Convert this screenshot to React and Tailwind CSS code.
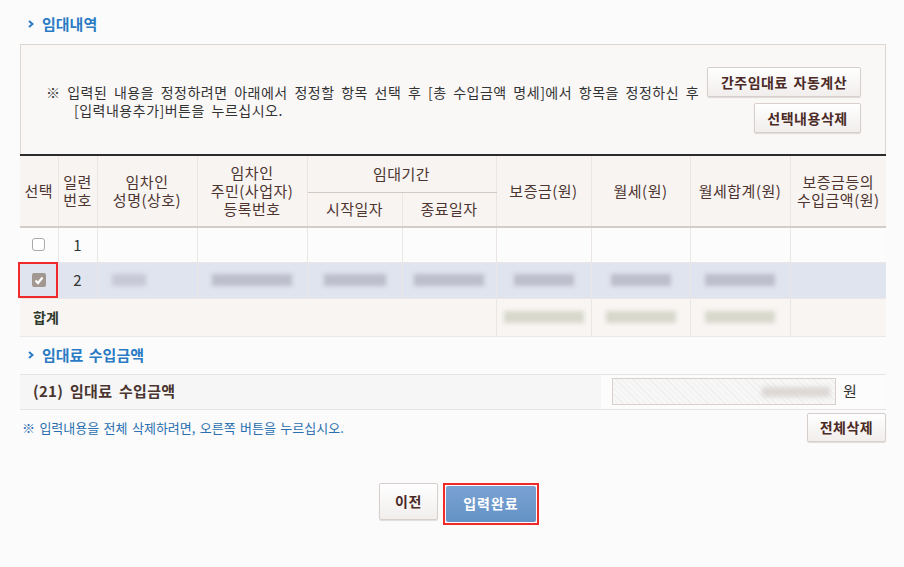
import React from "react";

const Chevron = () => (
  <svg width="6" height="8" viewBox="0 0 6 8" className="mr-[8px] shrink-0">
    <path d="M1 1 L4.5 4 L1 7" stroke="#2a7bc4" strokeWidth="2" fill="none" />
  </svg>
);

const Btn = ({ children, className = "" }) => (
  <button
    className={
      "rounded-[2px] border border-[#d6cfcb] bg-gradient-to-b from-white to-[#f1eeec] text-[14px] font-bold tracking-[0.5px] [word-spacing:2px] text-[#4b2a26] shadow-[0_1px_1px_rgba(0,0,0,0.12)] " +
      className
    }
  >
    {children}
  </button>
);

const Blur = ({ w, tone = "g" }) => (
  <div
    className={
      "mx-auto h-[12px] blur-[2px] " +
      (tone === "g" ? "bg-[#bdbdcc]" : "bg-[#d8d8cc]")
    }
    style={{ width: w }}
  />
);

export default function App() {
  const th =
    "border-r border-[#ebe6e3] text-[15px] font-normal tracking-[0.5px] text-[#4e3530] leading-[18px] text-center align-middle";
  const td = "border-r border-[#ebe6e3] text-center align-middle";
  return (
    <div className="min-h-[567px] w-[904px] bg-[#fbfbfb] font-['Noto_Sans_CJK_KR',sans-serif] text-[#333]">
      <div className="pl-[20px] pr-[18px]">
        {/* Section 1 title */}
        <div className="flex h-[44px] items-center pl-[8px] pt-[4px]">
          <Chevron />
          <span className="text-[15px] font-bold text-[#2a7bc4]">임대내역</span>
        </div>

        {/* Info box */}
        <div className="flex h-[110px] items-center justify-between border border-b-0 border-[#ddd7d2] bg-[#f9f8f7] pl-[25px] pr-[24px]">
          <div className="pt-[2px] text-[14px] leading-[18px] tracking-[0.5px] [word-spacing:3px] text-[#333]">
            <div>※ 입력된 내용을 정정하려면 아래에서 정정할 항목 선택 후 [총 수입금액 명세]에서 항목을 정정하신 후</div>
            <div className="pl-[28px]">[입력내용추가]버튼을 누르십시오.</div>
          </div>
          <div className="flex flex-col items-end gap-[6px] pt-[1px]">
            <Btn className="h-[30px] w-[154px]">간주임대료 자동계산</Btn>
            <Btn className="h-[30px] w-[107px]">선택내용삭제</Btn>
          </div>
        </div>

        {/* Table */}
        <table className="w-[866px] table-fixed border-collapse border-t-2 border-[#2b2b2b]">
          <colgroup>
            <col className="w-[38px]" />
            <col className="w-[39px]" />
            <col className="w-[100px]" />
            <col className="w-[110px]" />
            <col className="w-[95px]" />
            <col className="w-[94px]" />
            <col className="w-[95px]" />
            <col className="w-[99px]" />
            <col className="w-[100px]" />
            <col className="w-[96px]" />
          </colgroup>
          <thead className="bg-[#f7f4f2]">
            <tr className="h-[37px]">
              <th rowSpan={2} className={th}>선택</th>
              <th rowSpan={2} className={th}>일련<br />번호</th>
              <th rowSpan={2} className={th}>임차인<br />성명(상호)</th>
              <th rowSpan={2} className={th}>임차인<br />주민(사업자)<br />등록번호</th>
              <th colSpan={2} className={th + " border-b border-b-[#cfc8c3]"}>임대기간</th>
              <th rowSpan={2} className={th}>보증금(원)</th>
              <th rowSpan={2} className={th}>월세(원)</th>
              <th rowSpan={2} className={th}>월세합계(원)</th>
              <th rowSpan={2} className={th + " border-r-0"}>보증금등의<br />수입금액(원)</th>
            </tr>
            <tr className="h-[35px] border-b-2 border-[#d3ccc7]">
              <th className={th}>시작일자</th>
              <th className={th}>종료일자</th>
            </tr>
          </thead>
          <tbody>
            <tr className="h-[35px] border-b border-[#ebe7e4] bg-[#fcfcfc]">
              <td className={td}>
                <div className="mx-auto h-[13px] w-[13px] rounded-[3px] border border-[#a9a9a9] bg-white" />
              </td>
              <td className={td + " text-[15px] text-[#333]"}>1</td>
              <td className={td}></td>
              <td className={td}></td>
              <td className={td}></td>
              <td className={td}></td>
              <td className={td}></td>
              <td className={td}></td>
              <td className={td}></td>
              <td className="text-center"></td>
            </tr>
            <tr className="h-[36px] bg-[#e0e4ee]">
              <td className={td + " relative"}>
                <div className="absolute inset-[-1px_0_0_-2px] border-2 border-[#f02a2a]" />
                <div className="mx-auto flex h-[14px] w-[14px] items-center justify-center rounded-[2px] bg-[#a39891]">
                  <svg width="10" height="9" viewBox="0 0 10 9">
                    <path d="M1.5 4.5 L4 7 L8.5 1.5" stroke="white" strokeWidth="2.2" fill="none" />
                  </svg>
                </div>
              </td>
              <td className={td + " text-[15px] text-[#333]"}>2</td>
              <td className={td}>
                <div className="ml-[14px] h-[12px] w-[34px] bg-[#c8c8d6] blur-[2px]" />
              </td>
              <td className={td}><Blur w={80} /></td>
              <td className={td}><Blur w={62} /></td>
              <td className={td}><Blur w={70} /></td>
              <td className={td}><Blur w={60} /></td>
              <td className={td}><Blur w={60} /></td>
              <td className={td}><Blur w={70} /></td>
              <td className="text-center"></td>
            </tr>
            <tr className="h-[38px] border-t border-b border-[#ebe7e4] bg-[#f8f5f3]">
              <td colSpan={6} className="pl-[13px] text-left text-[14px] font-bold text-[#2e3a2c]">합계</td>
              <td className={td + " border-l"}><Blur w={80} tone="y" /></td>
              <td className={td}><Blur w={70} tone="y" /></td>
              <td className={td}><Blur w={70} tone="y" /></td>
              <td className="text-center"></td>
            </tr>
          </tbody>
        </table>

        {/* Section 2 title */}
        <div className="flex h-[37px] items-center pl-[8px]">
          <Chevron />
          <span className="text-[15px] font-bold text-[#2a7bc4] [word-spacing:2px]">임대료 수입금액</span>
        </div>

        <div className="flex h-[36px] border-t border-b border-[#e4e4e4]">
          <div className="flex w-[581px] items-center bg-[#f6f6f6] pl-[13px] text-[15px] font-bold tracking-[0.3px] [word-spacing:3px] text-[#4b3530]">
            (21) 임대료 수입금액
          </div>
          <div className="flex flex-1 items-center bg-[#fcfcfc] pl-[11px]">
            <div className="flex h-[27px] w-[224px] items-center justify-end border border-[#d9d0cc] bg-[repeating-linear-gradient(45deg,#f7f7f7_0px,#f7f7f7_3px,#efefef_3px,#efefef_4px)] pr-[5px]">
              <div className="h-[10px] w-[68px] bg-[#dcd8d6] blur-[2px]" />
            </div>
            <span className="ml-[7px] text-[15px] text-[#333]">원</span>
          </div>
        </div>

        <div className="flex h-[36px] items-center justify-between">
          <span className="pl-[2px] text-[13px] [word-spacing:1.5px] text-[#2a6fb0]">※ 입력내용을 전체 삭제하려면, 오른쪽 버튼을 누르십시오.</span>
          <Btn className="h-[29px] w-[79px]">전체삭제</Btn>
        </div>

        <div className="ml-[12px] flex justify-center gap-[5px] pt-[37px]">
          <Btn className="h-[37px] w-[59px]">이전</Btn>
          <div className="border-2 border-[#f02a2a] p-[1px]">
            <button className="h-[36px] w-[90px] rounded-[2px] bg-gradient-to-b from-[#7aa2d2] to-[#6392c6] text-[14px] font-bold tracking-[1px] text-white">
              입력완료
            </button>
          </div>
        </div>
      </div>
    </div>
  );
}
